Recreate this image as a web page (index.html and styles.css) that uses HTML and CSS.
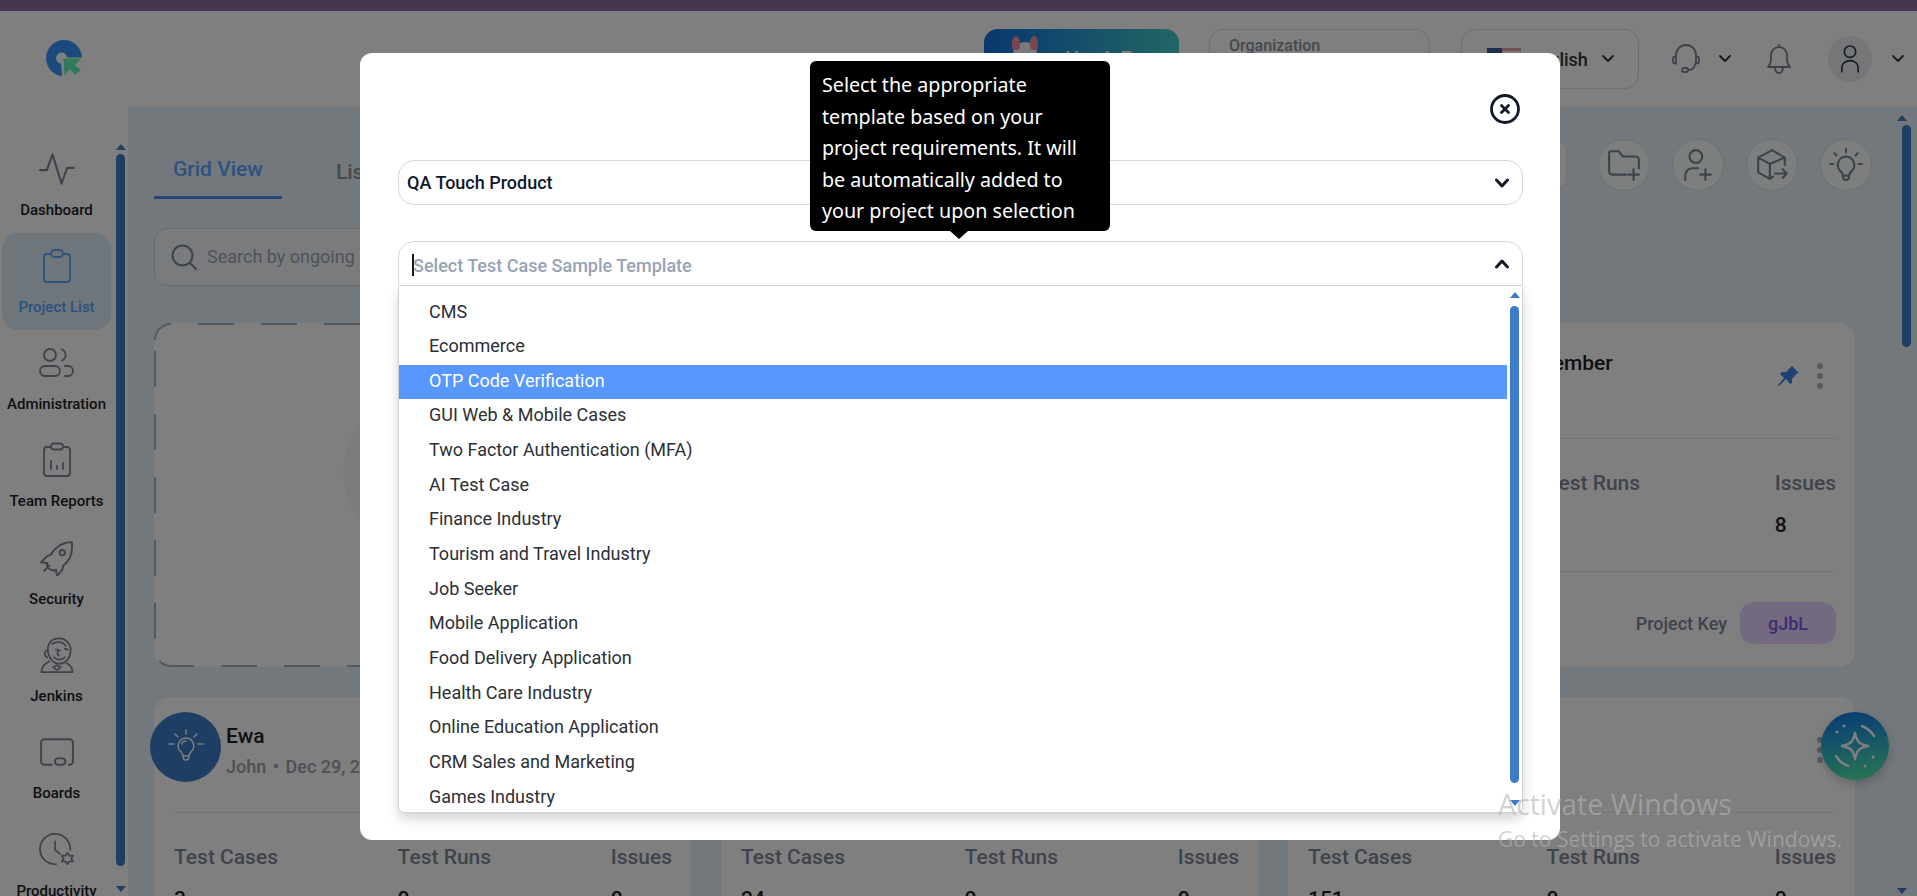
FILE: index.html
```html
<!DOCTYPE html>
<html lang="en">
<head>
<meta charset="utf-8">
<title>Project List</title>
<link rel="stylesheet" href="styles.css">
</head>
<body>
<div class="topbar"></div>
<header class="header">
  <svg class="logo" viewBox="0 0 36 36"><path class="logo-blue" d="M16 36A18 18 0 1 1 36 17.500H21A5.500 5.500 0 1 0 15 23.500z"/><path class="logo-green" d="M17.500 18.500H35L29 25.500L35 30L29 35L24 29L18.500 35.500z"/></svg>
  <div class="header-right">
    <div class="promo"><span class="promo-mascot"></span><span class="promo-text">Hawk Eye</span></div>
    <div class="org"><span class="org-label">Organization</span></div>
    <div class="lang">
      <span class="flag"></span><span class="lang-text">English</span>
      <svg class="chev" viewBox="0 0 12 8"><path d="M1 1l5 5 5-5"/></svg>
    </div>
    <div class="head-icon">
      <svg class="ic ic-head" viewBox="0 0 32 32"><path d="M6 14v-2a10 10 0 0 1 20 0v2M3 15.500c0-1 1-2 3-2v7c-2 0-3-1-3-2zM29 15.500c0-1-1-2-3-2v7c2 0 3-1 3-2zM25 21c0 4-3 6-7 6"/><rect x="12" y="25" width="6" height="4" rx="2"/></svg>
      <svg class="chev" viewBox="0 0 12 8"><path d="M1 1l5 5 5-5"/></svg>
    </div>
    <svg class="ic ic-bell" viewBox="0 0 30 32"><path d="M4 24c2-2 3-4 3-8v-4a8 8 0 0 1 16 0v4c0 4 1 6 3 8zM11 24c0 4 2 6 4 6s4-2 4-6M15 2v2"/></svg>
    <div class="head-user">
      <span class="avatar-bg"><svg class="ic ic-user" viewBox="0 0 32 36"><circle cx="16" cy="9" r="7"/><path d="M6 34v-6a10 8 0 0 1 20 0v6"/></svg></span>
      <svg class="chev" viewBox="0 0 12 8"><path d="M1 1l5 5 5-5"/></svg>
    </div>
  </div>
</header>

<div class="layout">
  <aside class="sidebar">
    <nav class="nav">
      <a class="nav-item"><span class="nav-icon"><svg viewBox="0 0 32 32"><path d="M1 17h6l5-14 8 26 5-14h6"/></svg></span><span class="nav-label">Dashboard</span></a>
      <a class="nav-item active"><span class="nav-icon"><svg viewBox="0 0 32 36"><path d="M9 6H6a3 3 0 0 0-3 3v22a3 3 0 0 0 3 3h20a3 3 0 0 0 3-3V9a3 3 0 0 0-3-3h-3"/><rect x="10" y="2" width="12" height="7" rx="3.500"/></svg></span><span class="nav-label">Project List</span></a>
      <a class="nav-item"><span class="nav-icon"><svg viewBox="0 0 36 30"><circle cx="11" cy="7" r="6"/><rect x="1" y="18" width="20" height="10" rx="5"/><path d="M23 1.500a6 6 0 0 1 0 11M26 18h3a5 5 0 0 1 0 10h-3"/></svg></span><span class="nav-label">Administration</span></a>
      <a class="nav-item"><span class="nav-icon"><svg viewBox="0 0 32 36"><path d="M9 5H6a3 3 0 0 0-3 3v23a3 3 0 0 0 3 3h20a3 3 0 0 0 3-3V8a3 3 0 0 0-3-3h-3"/><rect x="10" y="1.500" width="12" height="6" rx="3"/><path d="M10 19v8M16 24v3M22 21v6"/></svg></span><span class="nav-label">Team Reports</span></a>
      <a class="nav-item"><span class="nav-icon"><svg viewBox="0 0 34 34"><path d="M31 2c-9 0-15 4-20 12l-3 1-6 6 6 1c-1 2 0 5 3 6 2 1 4 1 5 0l1 6 5-6 1-4c7-5 9-13 8-22z"/><circle cx="22" cy="12" r="2.500"/><path d="M10 24l-5 5"/></svg></span><span class="nav-label">Security</span></a>
      <a class="nav-item"><span class="nav-icon"><svg viewBox="0 0 34 37"><path d="M8 17C6 9 10 2 18 1.500c8-.5 13 5 13 12 0 8-5 14-12 14-5 0-9-4-11-10.500z"/><path d="M8 14c-4-1-5 5-1 7M12 7c5-3 11-2 14 2M16 13l4 1M25 12l3 1M18 15c-1 2-1 3 1 4M14 21c3 3 8 3 11 0M9 25c-3 2-8 4-8 11h32c0-5-2-7-6-9M13 31l4 3 4-3-4-2z"/></svg></span><span class="nav-label">Jenkins</span></a>
      <a class="nav-item"><span class="nav-icon"><svg viewBox="0 0 34 28"><path d="M12 26H5a3 3 0 0 1-3-3V5a3 3 0 0 1 3-3h24a3 3 0 0 1 3 3v18a3 3 0 0 1-3 3h-1"/><rect x="15" y="20" width="10" height="6" rx="3"/></svg></span><span class="nav-label">Boards</span></a>
      <a class="nav-item"><span class="nav-icon"><svg viewBox="0 0 38 36"><path d="M18 33A16 16 0 1 1 33 18M17 9v9l5 4"/><path d="M30 21l2 3h4l-2 3 2 3h-4l-2 3-2-3h-4l2-3-2-3h4z"/></svg></span><span class="nav-label">Productivity</span></a>
    </nav>
    <span class="arrow-up side-up"></span>
    <span class="thumb side-thumb"></span>
    <span class="arrow-down side-down"></span>
  </aside>

  <main class="main">
    <div class="toolbar">
      <div class="tabs">
        <span class="tab tab-on">Grid View</span>
        <span class="tab">List View</span>
      </div>
      <div class="actions">
        <div class="filter"></div>
        <span class="circle"><svg viewBox="0 0 32 32"><path d="M18 25H5a3 3 0 0 1-3-3V5a2 2 0 0 1 2-2h7l4 5h12a3 3 0 0 1 3 3v8M25 20v10M20 25h10"/></svg></span>
        <span class="circle"><svg viewBox="0 0 32 32"><circle cx="14" cy="8" r="6"/><path d="M4 30v-4a7 7 0 0 1 7-7h5M23 20v10M18 25h10"/></svg></span>
        <span class="circle"><svg viewBox="0 0 32 32"><path d="M17 27l-3 2-11-6V9l13-7 12 7v7M3 9l11 6v14M14 15l14-6M19 24h11M26 20l4 4-4 4"/></svg></span>
        <span class="circle"><svg viewBox="0 0 32 32"><path d="M16 8a8 8 0 0 0-5 14c1 1 2 2 2 4h6c0-2 1-3 2-4a8 8 0 0 0-5-14zM13 26c0 3 1 4 3 4s3-1 3-4M16 1v3M5 5l2 2M27 5l-2 2M1 15h3M28 15h3"/></svg></span>
      </div>
    </div>
    <div class="search">
      <svg class="search-icon" viewBox="0 0 26 26"><circle cx="11.500" cy="11.500" r="10"/><path d="M19 19l6 6"/></svg>
      <span class="search-text">Search by ongoing</span>
    </div>

    <div class="grid">
      <div class="card dashed">
        <svg class="dash-frame" width="537" height="344">
          <path class="dash-top" d="M1 17A16 16 0 0 1 17 1H536"/>
          <path class="dash-left" d="M1 17V327"/>
          <path class="dash-bottom" d="M1 327A16 16 0 0 0 17 343H536"/>
        </svg>
        <span class="big-circle"></span>
      </div>
      <div class="card"></div>
      <div class="card">
        <div class="card-head">
          <div class="card-title-wrap"><div class="card-name">September</div></div>
          <div class="card-tools">
            <svg class="pin" viewBox="0 0 22 22"><path d="M14 1l7 7-3 1-4 5 0 4-2 1-4-5-7 7-1-1 6-7-4-4 2-2 4 0 4-4z"/></svg>
            <span class="dots"><i></i><i></i><i></i></span>
          </div>
        </div>
        <div class="stats">
          <div class="stat"><span class="stat-label">Test Cases</span><span class="stat-value">24</span></div>
          <div class="stat"><span class="stat-label">Test Runs</span><span class="stat-value">0</span></div>
          <div class="stat"><span class="stat-label">Issues</span><span class="stat-value">8</span></div>
        </div>
        <div class="card-foot"><span class="key-label">Project Key</span><span class="key">gJbL</span></div>
      </div>

      <div class="card">
        <div class="card-head">
          <span class="badge-round"><svg viewBox="0 0 36 36"><path d="M18 9a8 8 0 0 0-5 14c1 1 2 2 2 4h6c0-2 1-3 2-4a8 8 0 0 0-5-14zM15 27c0 3 1 4 3 4s3-1 3-4M18 1v4M7 5l3 3M29 5l-3 3M1 15h5M30 15h5M14 15c0-2 2-3 4-3"/></svg></span>
          <div class="card-title"><div class="card-name">Ewa</div><div class="card-sub">John <span class="sep">•</span> Dec 29, 2025</div></div>
        </div>
        <div class="stats">
          <div class="stat"><span class="stat-label">Test Cases</span><span class="stat-value">3</span></div>
          <div class="stat"><span class="stat-label">Test Runs</span><span class="stat-value">0</span></div>
          <div class="stat"><span class="stat-label">Issues</span><span class="stat-value">0</span></div>
        </div>
      </div>
      <div class="card">
        <div class="card-head"></div>
        <div class="stats">
          <div class="stat"><span class="stat-label">Test Cases</span><span class="stat-value">24</span></div>
          <div class="stat"><span class="stat-label">Test Runs</span><span class="stat-value">0</span></div>
          <div class="stat"><span class="stat-label">Issues</span><span class="stat-value">0</span></div>
        </div>
      </div>
      <div class="card">
        <div class="card-head">
          <div class="card-tools"><span class="dots"><i></i><i></i><i></i></span></div>
        </div>
        <div class="stats">
          <div class="stat"><span class="stat-label">Test Cases</span><span class="stat-value">151</span></div>
          <div class="stat"><span class="stat-label">Test Runs</span><span class="stat-value">0</span></div>
          <div class="stat"><span class="stat-label">Issues</span><span class="stat-value">0</span></div>
        </div>
      </div>
    </div>
    <span class="arrow-up main-up"></span>
    <span class="thumb main-thumb"></span>
    <span class="arrow-down main-down"></span>
    <span class="fab"><svg viewBox="0 0 68 68"><path class="fab-star" d="M34 21c2 9 4 11 13 13-9 2-11 4-13 13-2-9-4-11-13-13 9-2 11-4 13-13z"/><path class="fab-arc" d="M41 14c5 2 9 5 12 10M27 54c-5-2-9-5-12-10"/><circle cx="16" cy="20" r="1.500"/><circle cx="23" cy="14" r="1.500"/><circle cx="52" cy="45" r="1.500"/><circle cx="44" cy="54" r="1.500"/></svg></span>
  </main>
</div>

<div class="backdrop"></div>

<section class="modal">
  <button class="close" type="button"><svg viewBox="0 0 30 30"><circle cx="15" cy="15" r="13.500"/><path d="M11.500 11.500l7 7M18.500 11.500l-7 7"/></svg></button>
  <div class="select select-one">
    <span class="select-value">QA Touch Product</span>
    <svg class="sel-chev" viewBox="0 0 14 10"><path d="M1.500 2L7 8l5.500-6"/></svg>
  </div>
  <div class="select select-open">
    <span class="caret"></span><span class="select-placeholder">Select Test Case Sample Template</span>
    <svg class="sel-chev" viewBox="0 0 14 10"><path d="M1.500 8L7 2l5.500 6"/></svg>
  </div>
  <div class="dropdown">
    <ul class="options">
      <li>CMS</li>
      <li>Ecommerce</li>
      <li class="hl">OTP Code Verification</li>
      <li>GUI Web &amp; Mobile Cases</li>
      <li>Two Factor Authentication (MFA)</li>
      <li>AI Test Case</li>
      <li>Finance Industry</li>
      <li>Tourism and Travel Industry</li>
      <li>Job Seeker</li>
      <li>Mobile Application</li>
      <li>Food Delivery Application</li>
      <li>Health Care Industry</li>
      <li>Online Education Application</li>
      <li>CRM Sales and Marketing</li>
      <li>Games Industry</li>
    </ul>
    <span class="arrow-up drop-up"></span>
    <span class="thumb drop-thumb"></span>
    <span class="arrow-down drop-down"></span>
  </div>
  <div class="tooltip">Select the appropriate template based on your project requirements. It will be automatically added to your project upon selection</div>
</section>

<div class="watermark">
  <div class="wm-title">Activate Windows</div>
  <div class="wm-sub">Go to Settings to activate Windows.</div>
</div>
</body>
</html>
```

FILE: styles.css
```css
* { box-sizing: border-box; }
html, body { margin: 0; height: 896px; overflow: hidden; }
body { font-family: Roboto, "Liberation Sans", sans-serif; background: #fff; color: #1e1e28; position: relative; }
svg { display: block; fill: none; stroke-linecap: round; stroke-linejoin: round; }

.topbar { height: 11px; background: #866ea0; }

/* header */
.header { height: 96px; display: flex; align-items: center; padding-left: 46px; background: #fff; }
.logo { width: 36px; height: 36px; margin-top: -2px; }
.logo-blue { fill: #3894f8; }
.logo-green { fill: #5cf4b8; }
.header-right { margin-left: auto; display: flex; align-items: center; padding-right: 13px; }
.promo { width: 195px; height: 60px; border-radius: 14px; background: linear-gradient(100deg, #1070e0, #46d0c8); display: flex; align-items: center; padding-left: 28px; gap: 27px; color: #fff; font-size: 20px; font-weight: 500; }
.promo-mascot { width: 26px; height: 34px; border-radius: 50%; background: #f4f0f2; position: relative; flex: none; }
.promo-mascot::before, .promo-mascot::after { content: ""; position: absolute; top: -6px; width: 8px; height: 14px; border-radius: 50% 50% 30% 30%; background: #f090a0; }
.promo-mascot::before { left: 0; }
.promo-mascot::after { right: 0; }
.org { width: 221px; height: 60px; margin-left: 30px; border: 1px solid #d7dce4; border-radius: 14px; padding: 6px 19px; }
.org-label { font-size: 16px; font-weight: 500; color: #8a919e; }
.lang { width: 178px; height: 60px; margin-left: 31px; border: 1px solid #d7dce4; border-radius: 14px; display: flex; align-items: center; padding-left: 25px; }
.flag { width: 34px; height: 22px; background: linear-gradient(90deg, #3f5a9a 45%, transparent 45%), repeating-linear-gradient(180deg, #e8a0a8 0 3px, #f4f4f4 3px 6px); }
.lang-text { font-size: 18px; font-weight: 500; margin-left: 8px; color: #333; }
.lang .chev { margin-left: 14px; }
.chev { width: 12px; height: 8px; stroke: #2c3344; stroke-width: 1.800; }
.ic { stroke: #7c8494; stroke-width: 1.800; }
.head-icon { display: flex; align-items: center; margin-left: 31px; gap: 17px; }
.ic-head { width: 32px; height: 32px; }
.ic-bell { width: 30px; height: 32px; margin-left: 33px; }
.head-user { display: flex; align-items: center; margin-left: 34px; gap: 20px; }
.avatar-bg { width: 44px; height: 46px; border-radius: 50%; background: #ebedf0; display: flex; align-items: center; justify-content: center; }
.ic-user { width: 26px; height: 34px; stroke: #2c3344; stroke-width: 2; }

/* layout */
.layout { display: flex; height: 789px; }
.sidebar { width: 128px; flex: none; background: #fff; position: relative; overflow: hidden; }
.nav { padding: 28.500px 0 0 2px; }
.nav-item { width: 109px; height: 97.300px; display: flex; flex-direction: column; align-items: center; padding-top: 14px; border-radius: 16px; }
.nav-item.active { background: #dcecf8; }
.nav-item.active .nav-label { color: #5aa5ff; }
.nav-item.active svg { stroke: #5aa5ff; }
.nav-icon { height: 38px; display: flex; align-items: center; justify-content: center; }
.nav-icon svg { height: 36px; width: 36px; stroke: #7c8494; stroke-width: 1.800; }
.nav-label { font-size: 15px; line-height: 20px; margin-top: 12px; font-weight: 500; color: #1e1e28; white-space: nowrap; }

.thumb { position: absolute; width: 9px; border-radius: 5px; background: #3c7cc8; }
.arrow-up, .arrow-down { position: absolute; width: 0; height: 0; border-left: 5px solid transparent; border-right: 5px solid transparent; }
.arrow-up { border-bottom: 6px solid #3c7cc8; }
.arrow-down { border-top: 6px solid #3c7cc8; }
.side-up { left: 116px; top: 37px; }
.side-thumb { left: 116px; top: 47px; height: 712px; }
.side-down { left: 116px; top: 779px; }

/* main */
.main { flex: 1; min-width: 0; background: #e6f0f8; padding: 0 45px 0 26px; position: relative; overflow: hidden; }
.toolbar { height: 92px; display: flex; justify-content: space-between; }
.tabs { display: flex; align-items: flex-end; gap: 35px; }
.tab { font-size: 21px; font-weight: 500; line-height: 26px; padding: 0 19px 14px; color: #8a919e; }
.tab-on { color: #5aa5ff; border-bottom: 3px solid #4a90f8; }
.actions { display: flex; align-items: flex-start; gap: 22px; padding-top: 32px; }
.filter { width: 160px; height: 51px; margin-right: 9px; border: 1px solid #d7dce4; border-radius: 12px; background: #fdfdfe; }
.circle { width: 52px; height: 52px; border-radius: 50%; border: 1px solid #dde1e6; background: #fbfcfd; display: flex; align-items: center; justify-content: center; }
.circle svg { width: 34px; height: 34px; stroke: #7c8494; stroke-width: 2; }

.search { width: 480px; height: 58px; margin-top: 29px; border: 1px solid #d4d8de; border-radius: 14px; background: #f4f6f8; display: flex; align-items: center; padding-left: 16px; gap: 10px; }
.search-icon { width: 26px; height: 26px; stroke: #7c8494; stroke-width: 2; flex: none; }
.search-text { font-size: 18px; color: #a0a7b4; white-space: nowrap; margin-top: -2px; }

.grid { display: grid; grid-template-columns: 537px 537px 567px; grid-auto-rows: 344px; gap: 30px; margin-top: 37px; }
.card { background: #fff; border-radius: 16px; padding: 0 19px 0 20px; }
.dashed { position: relative; display: flex; justify-content: center; padding-top: 68px; }
.dash-frame { position: absolute; left: 0; top: 0; }
.dash-frame path { stroke: #aab2be; stroke-width: 2; stroke-linecap: butt; stroke-dasharray: 36 27; }
.dash-top { stroke-dashoffset: 11; }
.dash-left { stroke-dashoffset: 52; }
.dash-bottom { stroke-dashoffset: 51; }
.big-circle { width: 160px; height: 160px; border-radius: 50%; background: #f2f6fa; }

.card-head { height: 116px; padding-top: 15px; display: flex; border-bottom: 1px solid #e6e8ec; position: relative; }
.badge-round { width: 71px; height: 70px; margin-left: -24px; border-radius: 50%; background: #3c7cc8; flex: none; display: flex; align-items: center; justify-content: center; }
.badge-round svg { width: 36px; height: 36px; stroke: #fff; stroke-width: 1.500; }
.card-title { margin-left: 5px; padding-top: 11px; }
.card-title-wrap { padding: 12px 0 0 202px; }
.card-name { font-size: 21px; font-weight: 500; line-height: 26px; color: #1e1e28; }
.card-sub { font-size: 18px; font-weight: 500; line-height: 24px; margin-top: 6px; color: #9aa0ac; white-space: nowrap; }
.sep { margin: 0 2px; }
.card-tools { margin-left: auto; display: flex; align-items: center; gap: 17px; height: 76px; margin-right: 13px; }
.pin { width: 22px; height: 22px; }
.pin path { fill: #3c84e4; }
.dots { display: flex; flex-direction: column; gap: 4px; }
.dots i { width: 6px; height: 6px; border-radius: 50%; background: #b0b4be; display: block; }

.stats { display: flex; justify-content: space-between; padding: 31px 0 33px; border-bottom: 1px solid #e6e8ec; }
.stat { display: flex; flex-direction: column; gap: 16px; }
.stat-label { font-size: 21px; font-weight: 500; line-height: 26px; color: #7e8699; }
.stat-value { font-size: 21px; font-weight: 500; line-height: 26px; color: #1e1e28; }

.card-foot { display: flex; justify-content: flex-end; align-items: center; gap: 13px; padding-top: 30px; }
.key-label { font-size: 18px; font-weight: 500; color: #7e8699; }
.key { width: 96px; height: 42px; border-radius: 14px; background: #e8d4fe; color: #7e5ae8; font-size: 18px; font-weight: 500; display: flex; align-items: center; justify-content: center; }

.main-up { left: 1769px; top: 8px; }
.main-thumb { left: 1774px; top: 18px; height: 222px; }
.main-down { left: 1769px; top: 781px; }
.fab { position: absolute; left: 1693px; top: 605px; width: 68px; height: 68px; border-radius: 50%; background: linear-gradient(170deg, #0e74f0, #54f0a4); box-shadow: 0 4px 10px rgba(0,0,0,.2); }
.fab svg { width: 68px; height: 68px; }
.fab-star { stroke: #fff; stroke-width: 2.500; }
.fab-arc { stroke: #fff; stroke-width: 2.500; }
.fab circle { fill: #fff; }

/* overlay */
.backdrop { position: absolute; inset: 0; background: rgba(0,0,0,.5); }
.modal { position: absolute; left: 360px; top: 53px; width: 1200px; height: 787px; background: #fff; border-radius: 12px; padding: 107px 37px 0 38px; }
.close { position: absolute; left: 1130px; top: 41px; width: 30px; height: 30px; padding: 0; border: 0; background: none; }
.close svg { width: 30px; height: 30px; stroke: #111827; stroke-width: 2.800; }
.select { height: 45px; border: 1.500px solid #d4d6e2; border-radius: 16px; display: flex; align-items: center; position: relative; background: #fff; }
.select-one { padding-left: 8px; }
.select-value { font-size: 18px; font-weight: 500; color: #111827; }
.select-open { margin-top: 36px; border-radius: 16px 16px 0 0; padding: 3px 0 0 13px; }
.caret { width: 2px; height: 22px; background: #111827; margin-right: -1px; }
.select-placeholder { font-size: 18px; font-weight: 500; color: #97a3b4; }
.sel-chev { position: absolute; right: 13px; top: 50%; width: 14px; height: 10px; margin-top: -5px; stroke: #111827; stroke-width: 3; }
.dropdown { height: 526px; margin-top: 1px; border: 1px solid #cfd1d6; border-top: 0; border-radius: 0 0 6px 6px; box-shadow: 0 6px 12px rgba(0,0,0,.17); position: relative; overflow: hidden; background: #fff; }
.options { list-style: none; margin: 0; padding: 8.500px 15px 0 0; }
.options li { height: 34.670px; line-height: 32px; padding-left: 30px; font-size: 18px; color: #2c2f36; white-space: nowrap; }
.options .hl { background: #5897fb; color: #fff; }
.drop-up { left: 1111px; top: 5px; }
.drop-thumb { left: 1111px; top: 19px; height: 477px; }
.drop-down { left: 1111px; top: 513px; }
.tooltip { position: absolute; left: 450px; top: 8px; width: 300px; height: 170px; background: #000; color: #fff; border-radius: 6px; padding: 8px 12px; font-family: "Noto Sans", "Open Sans", sans-serif; font-size: 19.700px; line-height: 31.500px; }
.tooltip::after { content: ""; position: absolute; left: 140px; top: 170px; border-left: 9px solid transparent; border-right: 9px solid transparent; border-top: 8px solid #000; }

.watermark { position: absolute; left: 1498px; top: 785px; color: rgba(180,180,180,.6); font-family: "Open Sans", sans-serif; white-space: nowrap; }
.wm-title { font-size: 28.500px; line-height: 38px; }
.wm-sub { font-size: 21px; line-height: 28px; margin-top: 2px; }
```
